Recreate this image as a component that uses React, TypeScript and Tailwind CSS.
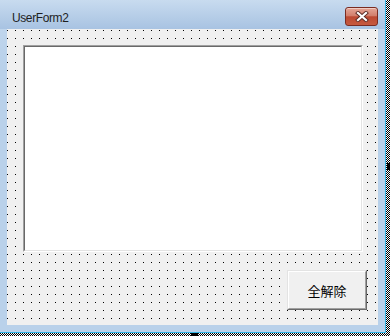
import React from "react";

// close box in the caption, Win7 basic style
const CloseButton = () => (
  <div className="flex h-[19px] w-[33px] items-center justify-center rounded-[3px] border border-[#7a2c22] bg-[image:linear-gradient(#e5a697,#d27f6c_45%,#bc4932_52%,#c65a3f)] shadow-[inset_0_1px_0_rgba(255,255,255,0.45)]">
    <svg width="14" height="11" viewBox="0 0 14 11">
      <path d="M3 2l8 7M11 2l-8 7" stroke="#5b2b25" strokeWidth="4" strokeLinecap="square" fill="none" />
      <path d="M3 2l8 7M11 2l-8 7" stroke="#ffffff" strokeWidth="2.2" strokeLinecap="square" fill="none" />
    </svg>
  </div>
);

const ListBox = () => (
  <div className="ml-[16px] mt-[16px] h-[207px] w-[340px] border border-t-[#a0a0a0] border-l-[#a0a0a0] border-r-white border-b-white">
    <div className="h-full w-full border border-t-[#696969] border-l-[#696969] border-r-[#e3e3e3] border-b-[#e3e3e3] bg-white" />
  </div>
);

const ClearButton = () => (
  <div className="ml-[280px] mt-[18px] h-[40px] w-[80px] border border-t-[#e3e3e3] border-l-[#e3e3e3] border-r-[#696969] border-b-[#696969]">
    <div className="flex h-full w-full items-center justify-center border border-t-white border-l-white border-r-[#a0a0a0] border-b-[#a0a0a0] bg-[#f0f0f0]">
      <span className="font-['Noto_Sans_CJK_JP',sans-serif] text-[13px] leading-none text-black">
        全解除
      </span>
    </div>
  </div>
);

const App = () => {
  return (
    <div className="relative h-[336px] w-[390px] overflow-hidden bg-white bg-[image:conic-gradient(#000_25%,#fff_0_50%,#000_0_75%,#fff_0)] bg-[size:2px_2px] font-['Liberation_Sans',sans-serif]">
      <div className="flex h-[333px] w-[386px] flex-col border-r border-b border-[#35b5e5] bg-[image:linear-gradient(#c4d8ee,#b9d1ea_20%,#b9d1ea)]">
        <div className="flex h-[29px] shrink-0 items-start justify-between bg-[image:linear-gradient(#c8dbef,#a8c3e2)] pl-[12px] pr-[7px]">
          <span className="pt-[12px] text-[12px] leading-[12px] tracking-[-0.4px] text-[#1e1e1e]">
            UserForm2
          </span>
          <div className="mt-[7px]">
            <CloseButton />
          </div>
        </div>
        <div className="flex flex-1 px-[7px] pb-[7px]">
          <div className="flex flex-1 flex-col items-start bg-[#f0f0f0] bg-[image:conic-gradient(at_1px_1px,transparent_75%,#000_0)] bg-[size:8px_8px] bg-[position:0px_1px]">
            <ListBox />
            <ClearButton />
          </div>
        </div>
      </div>
      {/* resize grips of the selected form */}
      <div className="absolute left-[387px] top-[163px] h-[7px] w-[3px] bg-black" />
      <div className="absolute left-[191px] top-[333px] h-[3px] w-[7px] bg-black" />
    </div>
  );
};

export default App;
